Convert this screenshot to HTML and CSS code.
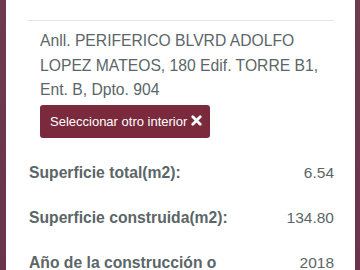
FILE: index.html
```html
<!DOCTYPE html>
<html>
<head>
<meta charset="utf-8">
<link rel="stylesheet" href="styles.css">
</head>
<body>
<div class="frame">
  <div class="card">
    <hr class="divider">
    <div class="address">
      <p class="addr-text">Anll. PERIFERICO BLVRD ADOLFO LOPEZ MATEOS, 180 Edif. TORRE B1, Ent. B, Dpto. 904</p>
      <button class="btn"><span>Seleccionar otro interior</span><svg class="x" width="11" height="11" viewBox="0 0 11 11"><path d="M1.8 1.8 L9.2 9.2 M9.2 1.8 L1.8 9.2" stroke="#fff" stroke-width="2.8" stroke-linecap="round"/></svg></button>
    </div>
    <div class="rows">
      <div class="row"><span class="label">Superficie total(m2):</span><span class="value">6.54</span></div>
      <div class="row"><span class="label">Superficie construida(m2):</span><span class="value">134.80</span></div>
      <div class="row"><span class="label">Año de la construcción o</span><span class="value">2018</span></div>
    </div>
  </div>
</div>
</body>
</html>
```
FILE: styles.css
```css
html, body {
  margin: 0;
  padding: 0;
  width: 360px;
  height: 270px;
  overflow: hidden;
  font-family: "Liberation Sans", Arial, sans-serif;
}
.frame {
  background: linear-gradient(180deg, #6d3a4f, #6a344c);
  padding: 0 5px 0 6px;
  height: 270px;
}
.card {
  background: #fff;
  height: 100%;
  padding: 0 21px 0 21px;
  box-sizing: border-box;
  overflow: hidden;
}
.divider {
  margin: 0;
  margin-top: 20px;
  border: 0;
  border-top: 1.5px solid #e4e6e9;
}
.address {
  padding: 0 0 0 13px;
  margin-top: 8px;
}
.addr-text {
  margin: 0;
  font-size: 15.7px;
  line-height: 24.5px;
  color: #5b6668;
}
.btn {
  display: flex;
  align-items: center;
  gap: 4px;
  margin-top: 2px;
  background: #7a2a3c;
  color: #fff;
  border: 0;
  border-radius: 3px;
  font-family: "Liberation Sans", Arial, sans-serif;
  font-size: 13px;
  height: 33px;
  padding: 0 8px 0 10px;
}
.x {
  display: block;
  margin-top: -1px;
}
.rows {
  margin-top: 26px;
  padding-left: 2px;
}
.row {
  display: flex;
  justify-content: space-between;
  align-items: baseline;
  height: 45px;
  color: #5b6668;
}
.label {
  font-weight: bold;
  font-size: 15.7px;
}
.value {
  font-size: 15.5px;
}
```
